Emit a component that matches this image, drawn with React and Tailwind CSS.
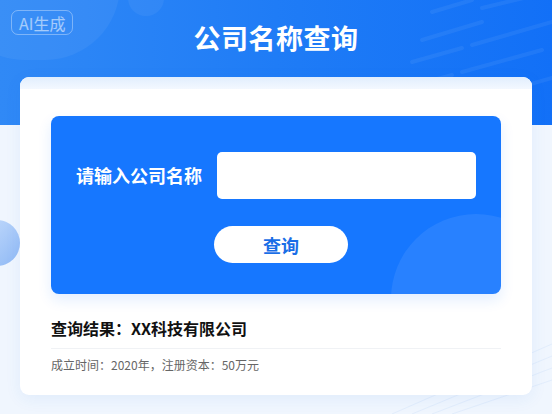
import React, { useState } from 'react';

const font = { fontFamily: '"Noto Sans CJK SC", "Noto Sans", sans-serif' };

export default function App() {
    const [name, setName] = useState('');

    return (
        <div className="relative w-[552px] h-[414px] overflow-hidden bg-[#f0f6fe]" style={font}>
            {/* 顶部蓝色背景 */}
            <div className="relative h-[125px] bg-gradient-to-r from-[#3089f6] via-[#1f7cf6] to-[#1270f7] overflow-hidden">
                <div className="absolute -left-[50px] -top-[90px] w-[170px] h-[150px] rounded-full bg-white/[0.05]"></div>
                <div className="absolute left-[128px] -top-[20px] w-[36px] h-[36px] rounded-full bg-white/[0.05]"></div>
                <svg className="absolute right-0 top-0" width="200" height="125" viewBox="0 0 200 125">
                    <g stroke="#ffffff" strokeOpacity="0.06" strokeWidth="4" strokeLinecap="round">
                        <line x1="80" y1="12" x2="120" y2="0" />
                        <line x1="130" y1="8" x2="180" y2="-4" />
                        <line x1="70" y1="40" x2="130" y2="22" />
                        <line x1="120" y1="45" x2="200" y2="22" />
                        <line x1="60" y1="62" x2="110" y2="48" />
                        <line x1="110" y1="72" x2="190" y2="50" />
                        <line x1="45" y1="90" x2="100" y2="75" />
                        <line x1="140" y1="95" x2="200" y2="78" />
                        <line x1="40" y1="118" x2="90" y2="104" />
                    </g>
                </svg>
                <div className="absolute left-[11px] top-[10px] h-[25px] px-[7px] flex items-center rounded-[7px] border border-white/35 text-white/55 text-[16px] leading-none">
                    AI生成
                </div>
                <h1 className="pt-[20px] text-center text-white text-[27px] font-bold leading-[36px] tracking-[0.5px]">公司名称查询</h1>
            </div>

            <div className="absolute left-[-28px] top-[220px] w-[48px] h-[46px] rounded-full bg-gradient-to-br from-[#c9defc] to-[#8fb9f5]"></div>
            <svg className="absolute right-0 bottom-0" width="160" height="110" viewBox="0 0 160 110">
                <g stroke="#d6e6fb" strokeOpacity="0.5" strokeWidth="1">
                    <line x1="0" y1="110" x2="160" y2="40" />
                    <line x1="20" y1="110" x2="160" y2="52" />
                    <line x1="40" y1="110" x2="160" y2="64" />
                    <line x1="60" y1="110" x2="160" y2="76" />
                </g>
            </svg>

            {/* 卡片 */}
            <div className="relative mx-[20px] -mt-[48px] h-[318px] rounded-[9px] bg-white shadow-[0_4px_16px_rgba(40,110,220,0.08)] overflow-hidden">
                <div className="h-[12px] bg-gradient-to-b from-[#e1eefd] to-[#f3f8ff]"></div>
                <div className="px-[31px] pt-[27px]">
                    <div className="relative h-[178px] rounded-[8px] bg-[#1677ff] overflow-hidden shadow-[0_6px_14px_rgba(22,119,255,0.12)]">
                        <div className="absolute right-[-60px] bottom-[-90px] w-[170px] h-[170px] rounded-full bg-white/[0.08]"></div>
                        <div className="relative flex items-center pt-[36px]">
                            <label className="w-[166px] text-right pr-[15px] text-white text-[18px] font-bold leading-[47px]">请输入公司名称</label>
                            <input
                                value={name}
                                onChange={(e) => setName(e.target.value)}
                                className="w-[259px] h-[47px] rounded-[5px] bg-white px-3 text-[15px] outline-none"
                            />
                        </div>
                        <div className="relative flex pl-[163px] pt-[27px]">
                            <button className="w-[134px] h-[37px] rounded-full bg-white text-[#1a6ee6] text-[18px] font-bold leading-none">查询</button>
                        </div>
                    </div>

                    <div className="pt-[22px] pb-[8px] border-b border-[#f0f2f5] text-[16px] font-bold text-[#111] leading-[24px]">
                        查询结果：XX科技有限公司
                    </div>
                    <div className="pt-[7px] text-[12px] text-[#666] leading-[18px]">
                        成立时间：2020年，注册资本：50万元
                    </div>
                </div>
            </div>
        </div>
    );
}
